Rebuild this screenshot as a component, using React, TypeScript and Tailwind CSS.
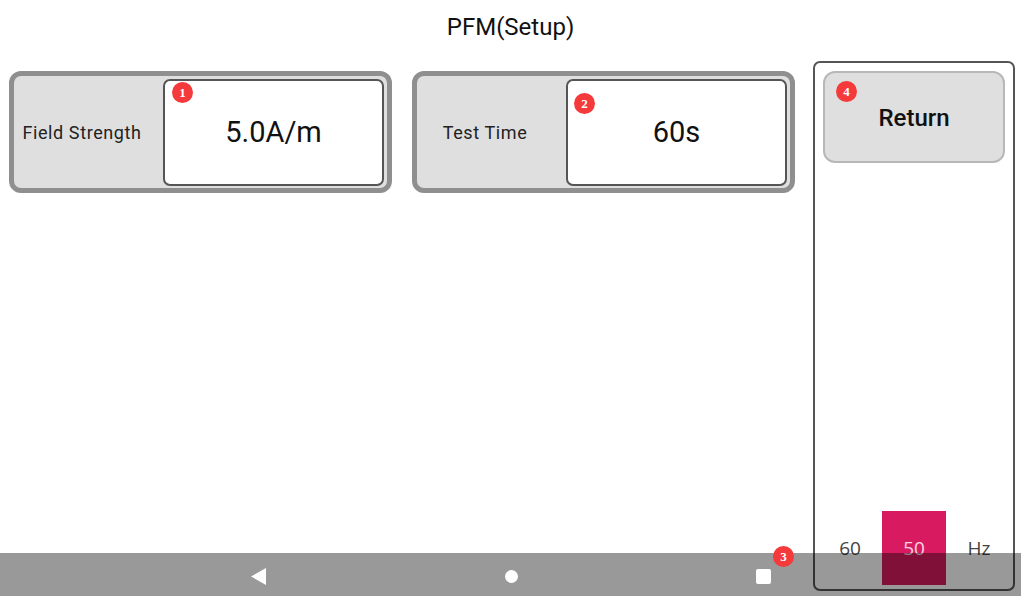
import React from 'react';

function Badge({ n, className }: { n: number; className: string }) {
  return (
    <span
      className={`absolute flex h-[21px] w-[21px] items-center justify-center rounded-full bg-[#f43a3a] text-[13px] font-bold leading-none text-white ${className}`}
      style={{ fontFamily: '"Liberation Serif", serif' }}
    >
      {n}
    </span>
  );
}

function SetupCard({ label, value, badge, badgeClass }: { label: string; value: string; badge: number; badgeClass: string }) {
  return (
    <div className="flex h-[122px] w-[383px] items-center rounded-[12px] border-[5px] border-[#8f8f8f] bg-[#dfdfdf]">
      <div className="w-[149px] pr-[13px] text-center text-[18px] tracking-[0.6px] text-[#222]">{label}</div>
      <div className="relative flex h-[107px] w-[221px] items-center justify-center rounded-[7px] border-2 border-[#555] bg-white pt-[2px] text-[29px] text-[#111]">
        {value}
        <Badge n={badge} className={badgeClass} />
      </div>
    </div>
  );
}

export default function App() {
  return (
    <div className="relative h-[596px] w-[1021px] overflow-hidden bg-white" style={{ fontFamily: 'Roboto, sans-serif' }}>
      <div className="flex h-[55px] items-center justify-center pb-[2px] text-[24px] text-[#111]">PFM(Setup)</div>

      <div className="flex items-start pl-[9px] pt-[6px]">
        <div className="flex gap-[20px] pt-[10px]">
          <SetupCard label="Field Strength" value="5.0A/m" badge={1} badgeClass="left-[7px] top-[1px]" />
          <SetupCard label="Test Time" value="60s" badge={2} badgeClass="left-[6px] top-[12px]" />
        </div>

        <div className="ml-[18px] flex h-[530px] w-[202px] flex-col justify-between rounded-[7px] border-2 border-[#555] px-[8px] pb-[4px] pt-[8px]">
          <div className="relative flex h-[92px] w-[182px] items-center justify-center rounded-[12px] border-2 border-[#b8b8b8] bg-[#dfdfdf] pt-[2px] text-[24px] font-medium text-[#111]">
            Return
            <Badge n={4} className="left-[11px] top-[8px]" />
          </div>
          <div className="flex h-[74px] items-center text-[19px] text-[#444]" style={{ fontFamily: '"Open Sans", sans-serif' }}>
            <span className="w-[59px] pr-[5px] text-center">60</span>
            <span className="flex h-full w-[64px] items-center justify-center bg-[#d81b60] text-[#fbd3e2]">50</span>
            <span className="flex-1 pl-[7px] text-center">Hz</span>
          </div>
        </div>
      </div>

      {/* system nav bar over the page */}
      <div className="absolute bottom-0 left-0 right-0 h-[43px] bg-black/40">
        <svg className="absolute left-[251px] top-[15px]" width="15" height="17" viewBox="0 0 15 17">
          <polygon points="0,8.5 15,0 15,17" fill="#fff" />
        </svg>
        <span className="absolute left-[505px] top-[17px] h-[13px] w-[13px] rounded-full bg-white" />
        <span className="absolute left-[756px] top-[16px] h-[15px] w-[15px] rounded-[2px] bg-white" />
      </div>
      <Badge n={3} className="left-[773px] top-[546px]" />
    </div>
  );
}
